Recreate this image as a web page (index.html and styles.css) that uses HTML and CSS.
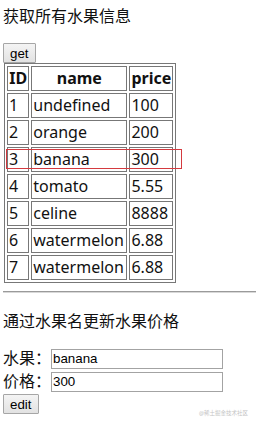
FILE: index.html
```html
<!DOCTYPE html>
<html lang="zh-CN">
<head>
    <meta charset="UTF-8">
    <meta name="viewport" content="width=device-width, initial-scale=1.0">
    <title>水果信息</title>
    <link rel="stylesheet" href="styles.css">
</head>
<body>
    <p class="title first">获取所有水果信息</p>
    <button class="btn">get</button>
    <table class="fruit-table">
        <tr>
            <th class="col-id">ID</th>
            <th class="col-name">name</th>
            <th class="col-price">price</th>
        </tr>
        <tr><td>1</td><td>undefined</td><td>100</td></tr>
        <tr><td>2</td><td>orange</td><td>200</td></tr>
        <tr><td>3</td><td>banana</td><td>300</td></tr>
        <tr><td>4</td><td>tomato</td><td>5.55</td></tr>
        <tr><td>5</td><td>celine</td><td>8888</td></tr>
        <tr><td>6</td><td>watermelon</td><td>6.88</td></tr>
        <tr><td>7</td><td>watermelon</td><td>6.88</td></tr>
    </table>
    <div class="highlight"></div>

    <hr class="divider">

    <p class="title">通过水果名更新水果价格</p>
    <div class="field">
        <label class="label">水果：</label>
        <input class="input" type="text" value="banana">
    </div>
    <div class="field">
        <label class="label">价格：</label>
        <input class="input" type="text" value="300">
    </div>
    <button class="btn edit">edit</button>

    <div class="watermark">@稀土掘金技术社区</div>
</body>
</html>
```

FILE: styles.css
```css
body, html {
    margin: 0;
    padding: 0;
}

body {
    position: relative;
    padding: 0 0 0 3px;
    height: 424px;
    box-sizing: border-box;
    font-family: "Noto Sans", "Noto Sans CJK SC", sans-serif;
    font-size: 16px;
    color: #111;
    background: #fff;
    overflow: hidden;
}

.title {
    margin: 0;
    line-height: 21px;
}

.title.first {
    padding-top: 6px;
    margin-bottom: 16px;
}

.btn {
    display: block;
    height: 20px;
    margin: 0;
    padding: 0 6px;
    font-family: "Liberation Sans", Arial, sans-serif;
    font-size: 13.33px;
    color: #000;
    background: linear-gradient(#f4f4f4, #e2e2e2);
    border: 1px solid #a6a6a6;
    border-radius: 1px;
}

.btn.edit {
    margin-top: 1px;
}

.fruit-table {
    table-layout: fixed;
    width: 172px;
    margin-left: 1px;
    border: 1px solid #777;
    border-spacing: 2px;
}

.fruit-table th,
.fruit-table td {
    border: 1px solid #777;
    padding: 1px;
    height: 21px;
    line-height: 21px;
    text-align: left;
    white-space: nowrap;
    overflow: visible;
}

.fruit-table th {
    text-align: center;
    font-weight: bold;
}

.col-id { width: 18px; }
.col-name { width: 91px; }
.col-price { width: 39px; }

.highlight {
    position: absolute;
    left: 6px;
    top: 149px;
    width: 176px;
    height: 20px;
    border: 1px solid #d43a3f;
    box-sizing: border-box;
}

.divider {
    margin: 8px 0 18px;
    height: 0;
    border: 0;
    border-top: 1px solid #9a9a9a;
    border-bottom: 1px solid #d8d8d8;
}

.title + .field {
    margin-top: 15px;
}

.field {
    display: flex;
    align-items: center;
    height: 23px;
}

.label {
    line-height: 23px;
}

.input {
    box-sizing: border-box;
    width: 172px;
    height: 20px;
    margin: 0;
    padding: 0 1px;
    font-family: "Liberation Sans", Arial, sans-serif;
    font-size: 13.33px;
    color: #000;
    border: 1px solid #a3a3a3;
    outline: none;
}

.watermark {
    position: absolute;
    right: 8px;
    top: 409px;
    font-size: 5.5px;
    color: #c4c4c4;
    white-space: nowrap;
}
```
